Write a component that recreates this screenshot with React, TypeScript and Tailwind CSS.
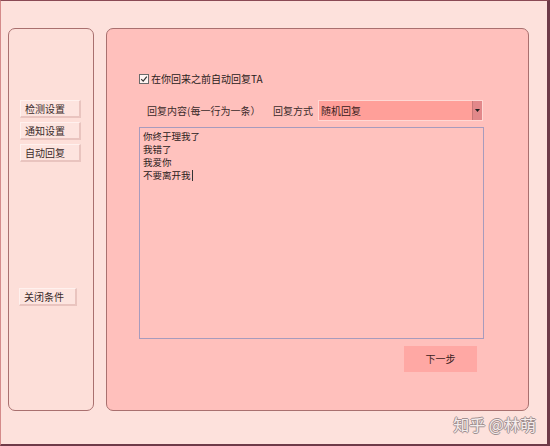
import React from "react";

const font = { fontFamily: '"Noto Sans CJK SC", "Noto Sans", sans-serif' };

function SideBtn({ label, w }: { label: string; w: string }) {
  return (
    <div
      className={`${w} h-[18px] flex items-center pl-[4px] text-[10px] leading-none text-[#3a2a2a] bg-[#fde4df] border-t border-l border-t-[#fff1ee] border-l-[#fff1ee] border-r-2 border-b-2 border-r-[#e9c4bf] border-b-[#e9c4bf]`}
    >
      {label}
    </div>
  );
}

export default function App() {
  return (
    <div
      style={font}
      className="w-[550px] h-[446px] bg-[#fde1dc] border-t border-t-[#8a4a55] border-l border-l-[#d48a8a] border-r-[3px] border-r-[#6e3a48] border-b-2 border-b-[#6e3a48] flex flex-col overflow-hidden"
    >
      <div className="flex pt-[27px] pl-[7px] gap-[12px]">
        {/* left panel */}
        <div className="w-[86px] h-[383px] rounded-[7px] border border-[#a9706f] bg-[#fddfd9] flex flex-col pl-[11px] pt-[71px]">
          <div className="flex flex-col gap-[4px]">
            <SideBtn label="检测设置" w="w-[61px]" />
            <SideBtn label="通知设置" w="w-[61px]" />
            <SideBtn label="自动回复" w="w-[61px]" />
          </div>
          <div className="mt-[126px] -ml-[1px]">
            <SideBtn label="关闭条件" w="w-[58px]" />
          </div>
        </div>
        {/* main panel */}
        <div className="w-[423px] h-[383px] rounded-[7px] border border-[#a9706f] bg-[#ffc0bc] flex flex-col pl-[32px] pt-[44px]">
          <div className="flex items-center gap-[2px] h-[12px]">
            <div className="w-[10px] h-[10px] border border-[#6a6a6a] bg-[#fff4f2] flex items-center justify-center">
              <svg width="8" height="8" viewBox="0 0 8 8">
                <path d="M1.2 4.2 L3.2 6.2 L6.8 1.6" fill="none" stroke="#333" strokeWidth="1.2" />
              </svg>
            </div>
            <span className="text-[10px] leading-none text-[#2a2020]">在你回来之前自动回复TA</span>
          </div>
          <div className="flex items-center mt-[15px] h-[21px]">
            <span className="ml-[8px] text-[10px] leading-none text-[#3a2a2a] w-[126px]">回复内容(每一行为一条）</span>
            <span className="text-[10px] leading-none text-[#3a2a2a] w-[45px]">回复方式</span>
            <div className="w-[165px] h-[21px] border border-[#ffd8d4] bg-[#ff9f99] flex items-stretch">
              <span className="flex-1 text-[10px] leading-[19px] pl-[2px] text-[#3a2020]">随机回复</span>
              <div className="w-[10px] bg-[#e2888a] border-l border-[#c77777] flex items-center justify-center">
                <svg width="5" height="3" viewBox="0 0 5 3">
                  <path d="M0 0 L5 0 L2.5 3 Z" fill="#222" />
                </svg>
              </div>
            </div>
          </div>
          <div className="mt-[6px] w-[345px] h-[212px] border border-[#a79bbd] bg-[#ffc2be] pl-[3px] pt-[2px] text-[9.5px] leading-[13px] text-[#2a2020]">
            <div>你终于理我了</div>
            <div>我错了</div>
            <div>我爱你</div>
            <div className="flex items-center">
              不要离开我<span className="inline-block w-px h-[11px] bg-[#333] ml-[1px]" />
            </div>
          </div>
          <div className="flex justify-end w-[338px] mt-[7px]">
            <div className="w-[73px] h-[26px] bg-[#ffa8a4] flex items-center justify-center text-[10px] leading-none text-[#3a2020]">
              下一步
            </div>
          </div>
        </div>
      </div>
      <div className="flex justify-end pr-[11px] mt-[5px]">
        <span
          className="text-[16px] leading-none text-[#f4ecec]"
          style={{
            textShadow:
              "1px 0 0 #a09090, -1px 0 0 #a09090, 0 1px 0 #a09090, 0 -1px 0 #a09090",
          }}
        >
          知乎 @林萌
        </span>
      </div>
    </div>
  );
}
